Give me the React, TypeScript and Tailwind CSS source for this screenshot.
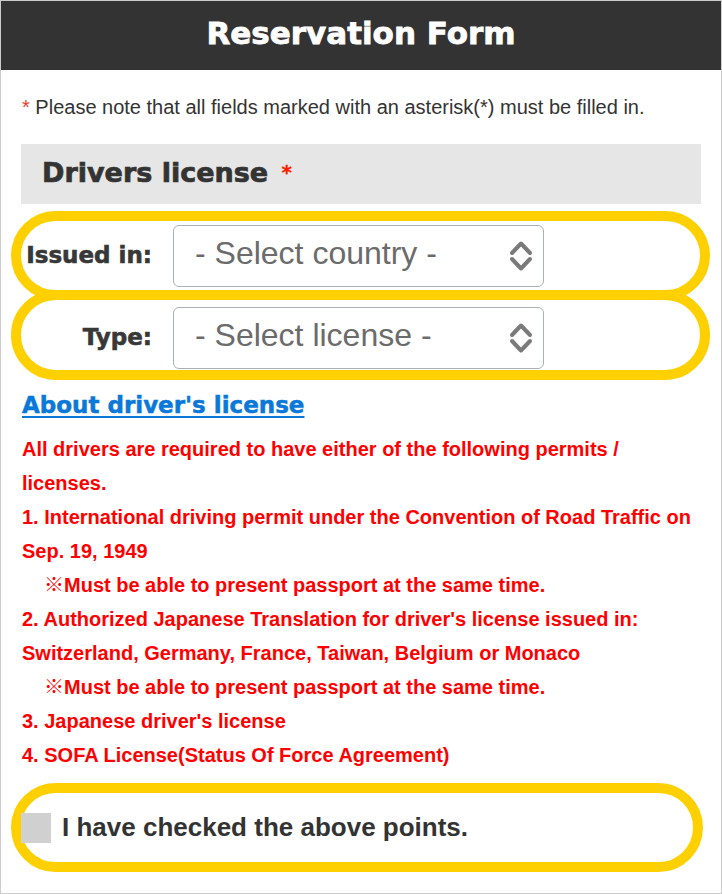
const heavy = { fontFamily: '"DejaVu Sans", Verdana, sans-serif' };

function Chevrons() {
  return (
    <svg
      width="24"
      height="36"
      viewBox="0 0 24 36"
      className="pointer-events-none absolute right-[11px] top-1/2 -translate-y-1/2"
    >
      <polyline points="3,15 12,5.5 21,15" fill="none" stroke="#7a7a7a" strokeWidth="4" strokeLinecap="round" strokeLinejoin="round" />
      <polyline points="3,21 12,30.5 21,21" fill="none" stroke="#7a7a7a" strokeWidth="4" strokeLinecap="round" strokeLinejoin="round" />
    </svg>
  );
}

function SelectRow({ label, placeholder, className }: { label: string; placeholder: string; className?: string }) {
  return (
    <div
      className={`ml-[10px] flex w-[699px] items-center rounded-full border-[10px] border-[#ffd000] ${className ?? ""}`}
    >
      <label
        className="w-[131px] text-right text-[23px] font-bold text-[#383838] [-webkit-text-stroke:0.6px_#383838]"
        style={heavy}
      >
        {label}
      </label>
      <div className="relative ml-[21px] h-[62px] w-[371px]">
        <select
          defaultValue=""
          className="h-full w-full appearance-none rounded-[6px] border border-[#a9afb9] bg-white pb-[5px] pl-[21px] font-['Liberation_Sans',Arial,sans-serif] text-[32px] text-[#6b6b6b] outline-none"
        >
          <option value="">{placeholder}</option>
        </select>
        <Chevrons />
      </div>
    </div>
  );
}

export default function App() {
  return (
    <div className="h-[894px] w-[722px] overflow-hidden border border-[#cccccc] bg-white font-['Liberation_Sans',Arial,'Noto_Sans_CJK_JP',sans-serif]">
      <div className="flex h-[69px] items-center justify-center bg-[#333333] pb-[5px]">
        <h1 className="text-[31px] font-bold leading-none text-white [-webkit-text-stroke:0.8px_#fff]" style={heavy}>
          Reservation Form
        </h1>
      </div>

      <p className="mt-[24px] px-[21px] text-[20px] leading-[26px] text-[#333]">
        <span className="text-[#e8412c]">*</span> Please note that all fields marked with an asterisk(*) must be filled in.
      </p>

      <div className="mx-[20px] mt-[24px] flex h-[60px] items-center bg-[#e6e6e6] px-[21px] pb-[3px]">
        <h2 className="text-[27px] font-bold leading-none text-[#333] [-webkit-text-stroke:0.7px_#333]" style={heavy}>
          Drivers license{" "}
          <span className="relative -top-[3px] left-[4px] text-[20px] text-[#ff1a00] [-webkit-text-stroke:0.3px_#ff1a00]">*</span>
        </h2>
      </div>

      <SelectRow label="Issued in:" placeholder="- Select country -" className="mt-[7px] h-[89px]" />
      <SelectRow label="Type:" placeholder="- Select license -" className="-mt-[10px] h-[90px] pt-[5px]" />

      <div className="mt-[10px] px-[21px]">
        <a
          href="#"
          className="text-[23px] font-bold leading-[30px] text-[#0a78d8] underline decoration-[2px] underline-offset-[3px] [-webkit-text-stroke:0.5px_#0a78d8]"
          style={heavy}
        >
          About driver's license
        </a>
      </div>

      <div className="mt-[12px] pl-[21px] pr-[20px] text-[20px] font-bold leading-[34px] text-[#ff0000]">
        <p>All drivers are required to have either of the following permits / licenses.</p>
        <p>1. International driving permit under the Convention of Road Traffic on Sep. 19, 1949</p>
        <p className="pl-[22px]">※Must be able to present passport at the same time.</p>
        <p>2. Authorized Japanese Translation for driver's license issued in: Switzerland, Germany, France, Taiwan, Belgium or Monaco</p>
        <p className="pl-[22px]">※Must be able to present passport at the same time.</p>
        <p>3. Japanese driver's license</p>
        <p>4. SOFA License(Status Of Force Agreement)</p>
      </div>

      <label className="ml-[10px] mt-[11px] flex h-[89px] w-[692px] cursor-pointer items-center rounded-full border-[10px] border-[#ffd000]">
        <span className="h-[30px] w-[30px] shrink-0 bg-[#d0d0d0]" />
        <input type="checkbox" className="hidden" />
        <span className="ml-[11px] text-[26px] font-bold text-[#333]">I have checked the above points.</span>
      </label>
    </div>
  );
}
